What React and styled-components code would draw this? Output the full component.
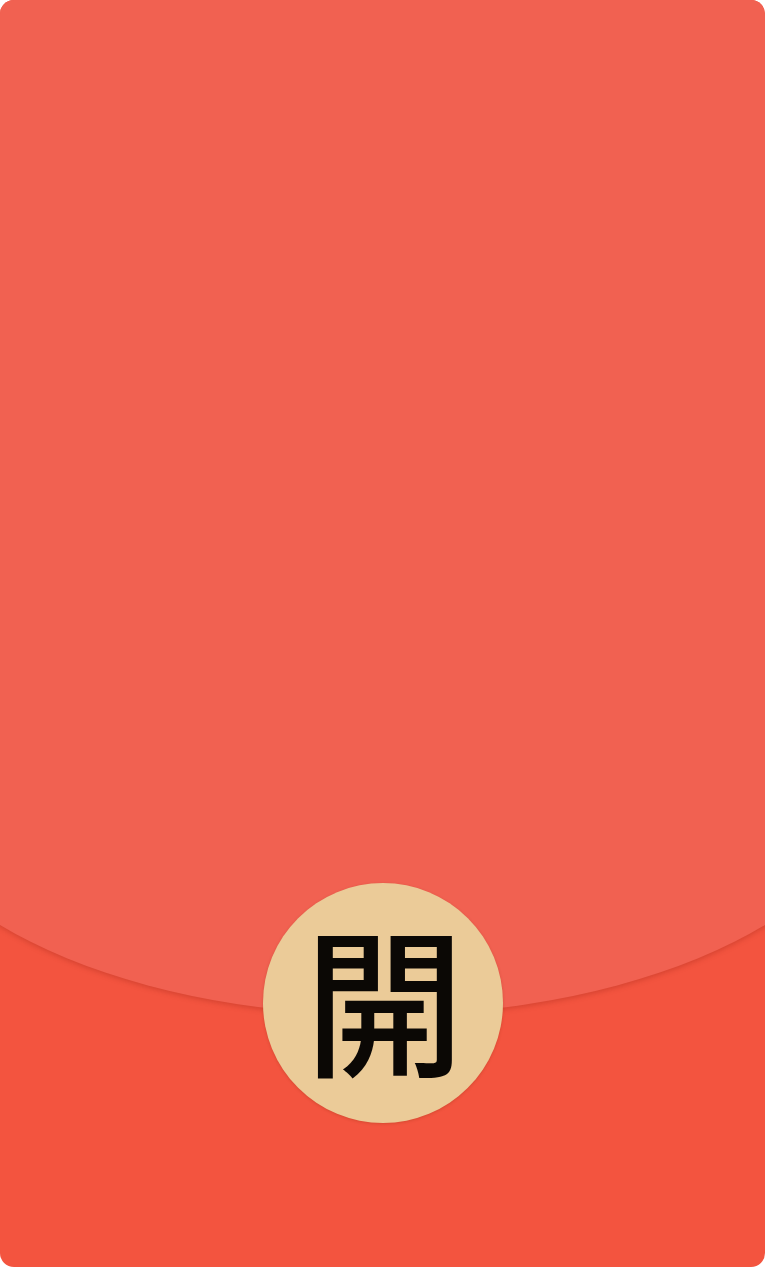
import React from "react";
import styled, { createGlobalStyle } from "styled-components";

const GlobalStyle = createGlobalStyle`
  html, body {
    margin: 0;
    padding: 0;
    background: #ffffff;
  }
`;

const Envelope = styled.div`
  position: relative;
  width: 765px;
  height: 1267px;
  border-radius: 14px;
  overflow: hidden;
  background: #f3543f;
  display: flex;
  flex-direction: column;
`;

const Flap = styled.div`
  width: 130%;
  margin-left: -15%;
  height: 1015px;
  flex: none;
  background: #f16151;
  border-radius: 0 0 50% 50% / 0 0 250px 250px;
  box-shadow: 0 2px 5px rgba(160, 40, 25, 0.35);
`;

const Seal = styled.button`
  position: absolute;
  left: 50%;
  top: 883px;
  width: 240px;
  height: 240px;
  margin-left: -120px;
  border: none;
  border-radius: 50%;
  background: #ebcb98;
  box-shadow: 0 1px 3px rgba(150, 50, 20, 0.3);
  display: flex;
  align-items: center;
  justify-content: center;
  padding: 0 0 16px 4px;
  cursor: pointer;
  font-family: "Noto Sans CJK TC", "Noto Sans CJK SC", sans-serif;
  font-weight: 500;
  font-size: 160px;
  line-height: 1;
  color: #0b0805;
`;

export default function App() {
  return (
    <>
      <GlobalStyle />
      <Envelope>
        <Flap />
        <Seal>開</Seal>
      </Envelope>
    </>
  );
}
